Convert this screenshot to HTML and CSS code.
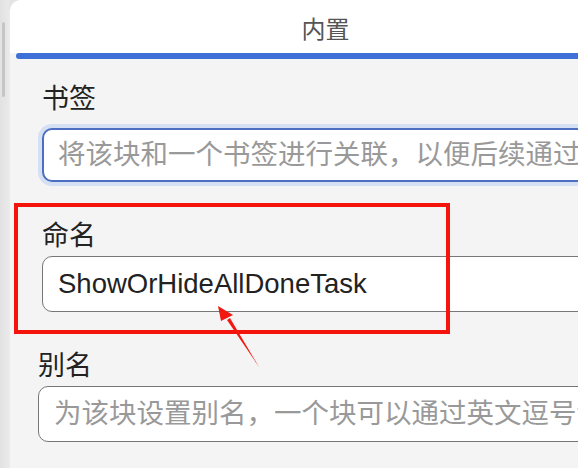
FILE: index.html
```html
<!DOCTYPE html>
<html lang="zh-CN">
<head>
    <meta charset="UTF-8">
    <meta name="viewport" content="width=device-width, initial-scale=1.0">
    <title>内置</title>
    <link rel="stylesheet" href="styles.css">
</head>
<body>

    <div class="app">
        <!-- left gutter with scrollbar -->
        <div class="gutter"><div class="thumb"></div></div>

        <!-- Attribute panel -->
        <div class="panel">
            <div class="tabs">
                <div class="tab-title">内置</div>
            </div>
            <div class="tab-bar"></div>

            <div class="content">
                <div class="field">
                    <label>书签</label>
                    <input class="input focused" placeholder="将该块和一个书签进行关联，以便后续通过书签进行查找">
                </div>
                <div class="field">
                    <label>命名</label>
                    <input class="input" value="ShowOrHideAllDoneTask">
                </div>
                <div class="field shifted">
                    <label>别名</label>
                    <input class="input" placeholder="为该块设置别名，一个块可以通过英文逗号设置多个别名">
                </div>
            </div>
        </div>
    </div>

    <!-- annotation -->
    <div class="mark-box"></div>
    <svg class="mark-arrow" width="80" height="80" viewBox="0 0 80 80">
        <path d="M59 72 L30 23 L27 25 Z" fill="#f01810"/>
        <path d="M18 11 L33 20 L21 26 Z" fill="#f01810"/>
    </svg>

</body>
</html>
```

FILE: styles.css
```css
* { margin: 0; padding: 0; box-sizing: border-box; }
body { background: #e4e4e4; overflow: hidden; font-family: "Liberation Sans", "Noto Sans CJK SC", sans-serif; }

.app { display: flex; height: 468px; }

/* left scrollbar strip */
.gutter { width: 9px; flex: none; background: linear-gradient(to right, #e2e2e2, #e9e9e9); padding: 22px 0 0 2px; }
.thumb { width: 3px; height: 75px; background: #c6c6c6; border-radius: 2px; }

.panel { width: 632px; flex: none; background: #f4f4f4; border-top-left-radius: 12px; overflow: hidden; border-left: 1px solid #ececec; }

.tabs { height: 53px; background: #fff; display: flex; align-items: center; justify-content: center; padding-top: 2px; }
.tab-title { font-size: 24px; color: #555; font-family: "Noto Sans CJK SC", sans-serif; }
.tab-bar { height: 6px; margin-left: 6px; background: #3e70d8; border-radius: 3px 0 0 3px; }

.content { padding: 23px 0 0 32px; display: flex; flex-direction: column; gap: 37px; }
.field { display: flex; flex-direction: column; gap: 7px; }
.field label { font-size: 27px; line-height: 30px; color: #222; font-family: "Noto Sans CJK SC", sans-serif; }
.field.shifted { margin-left: -4px; }

.input {
    height: 56px; width: 620px; border: 1px solid #777; border-radius: 10px; background: #fff;
    padding: 0 15px; font-size: 27.5px; color: #222; outline: none;
    font-family: "Liberation Sans", "Noto Sans CJK SC", sans-serif;
}
.input::placeholder { color: #999; font-family: "Noto Sans CJK SC", sans-serif; font-size: 27.5px; }
.input.focused { height: 54px; margin-top: 9px; border: 2px solid #4c6fc2; box-shadow: 0 0 0 4px #d6e0f4; padding-left: 14px; }

/* red annotation */
.mark-box { position: absolute; left: 14px; top: 203px; width: 436px; height: 131px; border: 4px solid #f4140c; }
.mark-arrow { position: absolute; left: 200px; top: 295px; }
```
